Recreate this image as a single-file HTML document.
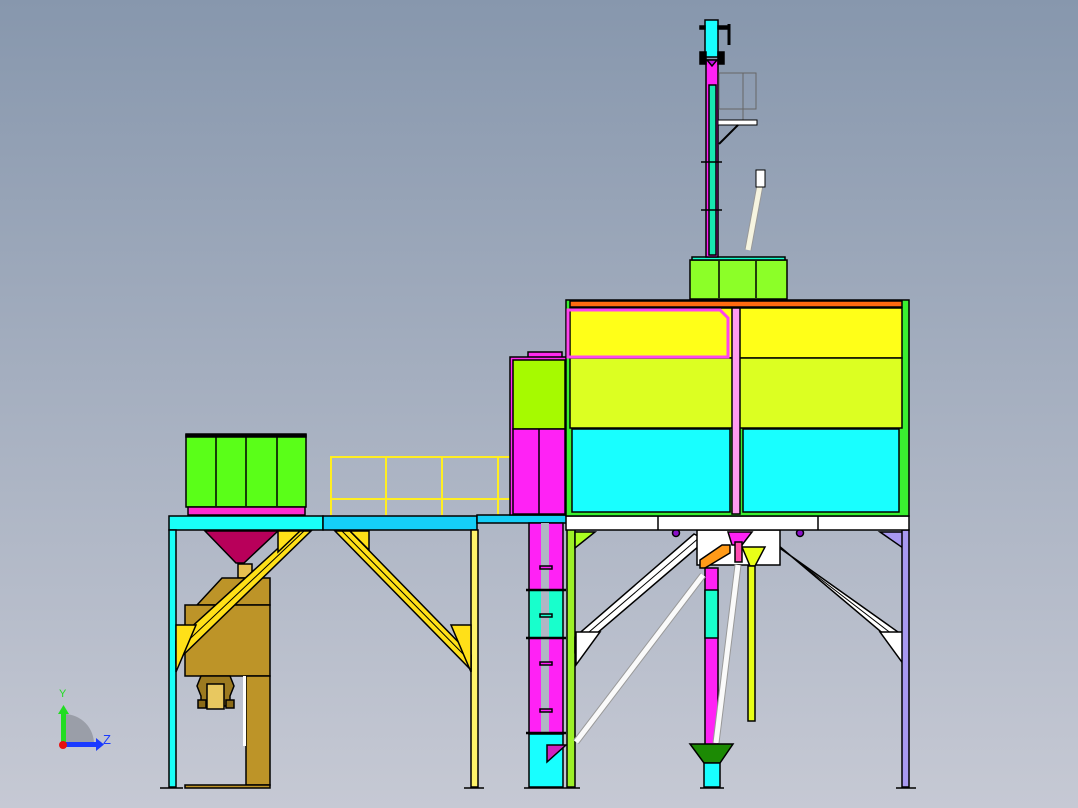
<!DOCTYPE html>
<html><head><meta charset="utf-8"><style>
html,body{margin:0;padding:0;width:1078px;height:808px;overflow:hidden}
svg{display:block}
</style></head><body>
<svg width="1078" height="808" viewBox="0 0 1078 808" xmlns="http://www.w3.org/2000/svg" stroke="#000" stroke-width="1.5">
<defs><linearGradient id="bg" x1="0" y1="0" x2="0" y2="1"><stop offset="0" stop-color="#8797ad"/><stop offset="1" stop-color="#c6c9d4"/></linearGradient></defs>
<rect width="1078" height="808" fill="url(#bg)" stroke="none"/>

<!-- LEFT HOPPER -->
<rect x="186" y="435" width="120" height="72" fill="#5aff18"/>
<line x1="216" y1="437" x2="216" y2="506"/><line x1="246" y1="437" x2="246" y2="506"/><line x1="277" y1="437" x2="277" y2="506"/>
<rect x="186" y="434" width="120" height="3" fill="#000"/>
<rect x="188" y="507" width="117" height="8" fill="#ff2bd0"/>
<!-- railing -->
<g stroke="#ffee22" stroke-width="2" fill="none">
<line x1="330" y1="457" x2="512" y2="457"/><line x1="330" y1="499" x2="512" y2="499"/>
<line x1="331" y1="456" x2="331" y2="515"/><line x1="386" y1="456" x2="386" y2="515"/><line x1="442" y1="456" x2="442" y2="515"/><line x1="498" y1="456" x2="498" y2="515"/>
</g>
<!-- platform beams -->
<rect x="169" y="516" width="154" height="14" fill="#19fff8"/>
<rect x="323" y="516" width="154" height="14" fill="#15cff8"/>
<rect x="477" y="515" width="98" height="8" fill="#15cff8"/>
<!-- left legs -->
<rect x="169" y="530" width="7" height="257" fill="#19fff8"/>
<rect x="471" y="530" width="7" height="257" fill="#fff36a"/>
<line x1="160" y1="788" x2="183" y2="788"/><line x1="464" y1="788" x2="484" y2="788"/>
<!-- magenta cone -->
<polygon points="205,531 278,531 244,563 236,563" fill="#b8005a"/>
<rect x="238" y="564" width="14" height="14" fill="#e8c050"/>
<!-- brown machine -->
<polygon points="197,605 222,578 270,578 270,605" fill="#bd9428"/>
<rect x="185" y="605" width="85" height="71" fill="#bd9428"/>
<rect x="246" y="676" width="24" height="109" fill="#bd9428"/>
<rect x="185" y="785" width="85" height="3" fill="#bd9428"/>
<rect x="243" y="676" width="3" height="70" fill="#fff" stroke="none"/>
<path d="M201,676 h29 l4,10 -4,10 v10 h-29 v-10 l-4,-10z" fill="#9c7a20"/>
<rect x="207" y="684" width="17" height="25" fill="#e8c860"/>
<rect x="198" y="700" width="8" height="8" fill="#8a6a18"/><rect x="226" y="700" width="8" height="8" fill="#8a6a18"/>
<!-- yellow braces -->
<polygon points="176,641 176,662 311,531 297,531" fill="#ffe018"/>
<line x1="176" y1="652" x2="304" y2="531" stroke-width="1"/>
<polygon points="176,625 196,625 176,672" fill="#ffe018"/>
<polygon points="278,531 300,531 278,552" fill="#ffe018"/>
<polygon points="335,531 350,531 471,655 471,670" fill="#ffe018"/>
<line x1="342" y1="531" x2="471" y2="662" stroke-width="1"/>
<polygon points="350,531 369,531 369,550" fill="#ffe018"/>
<polygon points="451,625 471,625 471,672" fill="#ffe018"/>

<!-- middle elevator tower -->
<rect x="528" y="352" width="34" height="6" fill="#ff2bf0"/>
<rect x="510" y="357" width="57" height="158" fill="#ff2bf0" stroke="#000"/>
<rect x="513" y="360" width="52" height="69" fill="#a6fa00"/>
<rect x="513" y="429" width="52" height="85" fill="#ff22f5"/><line x1="539" y1="429" x2="539" y2="514"/>
<rect x="529" y="523" width="34" height="67" fill="#ff22f5"/>
<rect x="529" y="590" width="34" height="48" fill="#18ffcc"/>
<rect x="529" y="638" width="34" height="96" fill="#ff22f5"/>
<rect x="529" y="734" width="34" height="53" fill="#18ffff"/>
<rect x="541" y="523" width="8" height="211" fill="#b0b6c4" stroke="none"/>
<line x1="526" y1="590" x2="566" y2="590" stroke-width="2.5"/><line x1="526" y1="638" x2="566" y2="638" stroke-width="2.5"/><line x1="526" y1="733" x2="566" y2="733" stroke-width="2.5"/>
<rect x="540" y="566" width="12" height="3" fill="#ff22f5"/><rect x="540" y="614" width="12" height="3" fill="#18ffcc"/><rect x="540" y="662" width="12" height="3" fill="#ff22f5"/><rect x="540" y="709" width="12" height="3" fill="#ff22f5"/>
<polygon points="547,745 566,745 547,762" fill="#d020c0"/>
<line x1="524" y1="788" x2="580" y2="788"/>
<rect x="567" y="522" width="8" height="265" fill="#9cf028"/>

<!-- right lower structure -->
<polygon points="575,637 575,652 706,540 694,534" fill="#fff"/>
<line x1="575" y1="644" x2="700" y2="537" stroke-width="1"/>
<polygon points="905,637 905,652 772,540 760,534" fill="#fff"/>
<line x1="905" y1="644" x2="766" y2="537" stroke-width="1"/>
<polygon points="576,632 600,632 576,665" fill="#fff"/>
<polygon points="880,632 904,632 904,665" fill="#fff"/>
<polygon points="575,532 595,532 575,548" fill="#aaff22"/>
<polygon points="880,532 903,532 903,548" fill="#a899f0"/>
<rect x="697" y="530" width="83" height="35" fill="#fff"/>
<polygon points="728,532 752,532 742,545 732,545" fill="#ff22f5"/>
<polygon points="700,560 722,545 730,545 730,553 705,568 700,568" fill="#ff9a18"/>
<rect x="705" y="568" width="13" height="178" fill="#ff22f5"/>
<rect x="705" y="590" width="13" height="48" fill="#18ffcc"/>
<polygon points="742,547 765,547 755,566 750,566" fill="#e8ff18"/>
<rect x="748" y="566" width="7" height="155" fill="#e8ff18"/>
<line x1="703" y1="575" x2="576" y2="742" stroke="#999" stroke-width="7"/><line x1="703" y1="575" x2="576" y2="742" stroke="#fafafa" stroke-width="5"/>
<line x1="738" y1="565" x2="716" y2="743" stroke="#999" stroke-width="7"/><line x1="738" y1="565" x2="716" y2="743" stroke="#fafafa" stroke-width="5"/>
<rect x="735" y="542" width="7" height="20" fill="#ff4bb0"/>
<polygon points="690,744 733,744 720,763 704,763" fill="#1c8a04"/>
<rect x="704" y="763" width="16" height="24" fill="#18ffff"/>
<line x1="700" y1="788" x2="724" y2="788"/>
<circle cx="676" cy="533" r="3.5" fill="#8a10c8"/><circle cx="800" cy="533" r="3.5" fill="#8a10c8"/>
<rect x="902" y="530" width="7" height="257" fill="#a899f0"/>
<line x1="896" y1="788" x2="916" y2="788"/>

<!-- big box -->
<rect x="566" y="516" width="343" height="14" fill="#fff"/>
<line x1="658" y1="516" x2="658" y2="530"/><line x1="818" y1="516" x2="818" y2="530"/>
<rect x="566" y="300" width="343" height="216" fill="#3af030"/>
<rect x="570" y="301" width="332" height="6" fill="#ff6a10"/>
<rect x="570" y="308" width="332" height="50" fill="#ffff18"/>
<rect x="570" y="358" width="332" height="70" fill="#dcff22"/>
<rect x="572" y="429" width="158" height="83" fill="#18ffff"/>
<rect x="743" y="429" width="156" height="83" fill="#18ffff"/>
<path d="M568,310 H720 L728,318 V357 H568Z" fill="none" stroke="#ff44ee" stroke-width="3"/>
<rect x="732" y="308" width="8" height="206" fill="#ff9cf0"/>

<!-- top unit -->
<rect x="690" y="260" width="97" height="39" fill="#8cff28"/>
<line x1="719" y1="261" x2="719" y2="298"/><line x1="756" y1="261" x2="756" y2="298"/>
<rect x="692" y="257" width="93" height="3" fill="#18ffcc"/>
<!-- tall pipe -->
<rect x="706" y="60" width="12" height="197" fill="#ff22f5"/>
<rect x="709" y="85" width="7" height="170" fill="#18e6b0"/>
<rect x="705" y="20" width="13" height="37" fill="#18ffff"/>
<rect x="700" y="26" width="5" height="3" fill="#000"/><rect x="718" y="26" width="10" height="3" fill="#000"/>
<line x1="729" y1="24" x2="729" y2="45" stroke-width="3"/>
<rect x="700" y="52" width="6" height="12" fill="#000"/><rect x="718" y="52" width="6" height="12" fill="#000"/>
<polygon points="707,60 717,60 712,66" fill="#c010e0"/>
<line x1="701" y1="162" x2="722" y2="162"/><line x1="701" y1="210" x2="722" y2="210"/>
<g stroke="#666" stroke-width="1" fill="none"><rect x="719" y="73" width="37" height="36"/><line x1="743" y1="73" x2="743" y2="120"/></g>
<rect x="718" y="120" width="39" height="5" fill="#fff" stroke-width="1"/>
<line x1="719" y1="144" x2="738" y2="125" stroke-width="2"/>
<line x1="760" y1="185" x2="748" y2="250" stroke="#999" stroke-width="7"/><line x1="760" y1="185" x2="748" y2="250" stroke="#f6f4e0" stroke-width="5"/>
<rect x="756" y="170" width="9" height="17" fill="#fff" stroke-width="1"/>

<!-- axis triad -->
<g stroke="none">
<path d="M64,745 V714 A30,30 0 0 1 94,745Z" fill="#9a9ea8"/>
<rect x="61" y="712" width="5" height="33" fill="#22dd22"/>
<polygon points="58,714 69,714 63.5,705" fill="#22dd22"/>
<rect x="64" y="742" width="32" height="5" fill="#1a3aff"/>
<polygon points="96,738 96,751 104,744.5" fill="#1a3aff"/>
<circle cx="63" cy="745" r="4" fill="#e81010"/>
</g>
<text x="59" y="697" font-family="Liberation Sans, sans-serif" font-size="11" fill="#22dd22" stroke="none">Y</text>
<text x="103" y="744" font-family="Liberation Sans, sans-serif" font-size="13" fill="#1a3aff" stroke="none">Z</text>
</svg>
</body></html>
